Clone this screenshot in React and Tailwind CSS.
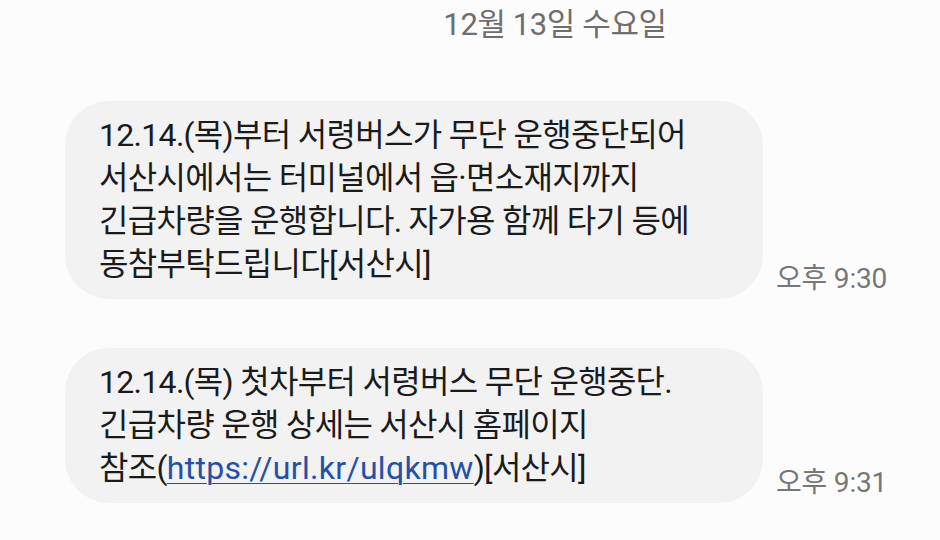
const font = { fontFamily: 'Roboto, "Noto Sans CJK KR", "Noto Sans", sans-serif' };

const Message = ({ children, time }) => (
  <div className="flex items-end gap-[13px]">
    <div className="w-[698px] rounded-[44px] bg-[#f2f2f3] py-[13px] pl-[34px] pr-6 text-[32px] leading-[43px] tracking-[-0.7px] text-[#1b1b1b]">
      {children}
    </div>
    <span className="mb-[4px] text-[28px] leading-[32px] tracking-[-0.2px] whitespace-nowrap text-[#777777]">{time}</span>
  </div>
);

export default function App() {
  return (
    <div className="h-[540px] w-[940px] overflow-hidden bg-[#fcfcfd]" style={font}>
      <div className="flex justify-center pt-[5px] pl-[170px]">
        <span className="text-[31px] leading-[40px] tracking-[-0.4px] text-[#6e6e6e]">12월 13일 수요일</span>
      </div>
      <div className="mt-[56px] flex flex-col gap-[49px] pl-[65px]">
        <Message time="오후 9:30">
          <p>12.14.(목)부터 서령버스가 무단 운행중단되어</p>
          <p>서산시에서는 터미널에서 읍·면소재지까지</p>
          <p>긴급차량을 운행합니다. 자가용 함께 타기 등에</p>
          <p>동참부탁드립니다[서산시]</p>
        </Message>
        <Message time="오후 9:31">
          <p>12.14.(목) 첫차부터 서령버스 무단 운행중단.</p>
          <p>긴급차량 운행 상세는 서산시 홈페이지</p>
          <p>
            참조(
            <a href="#" className="tracking-[0.3px] text-[#2450a6] underline decoration-1 underline-offset-[4px]">
              https://url.kr/ulqkmw
            </a>
            )[서산시]
          </p>
        </Message>
      </div>
    </div>
  );
}
